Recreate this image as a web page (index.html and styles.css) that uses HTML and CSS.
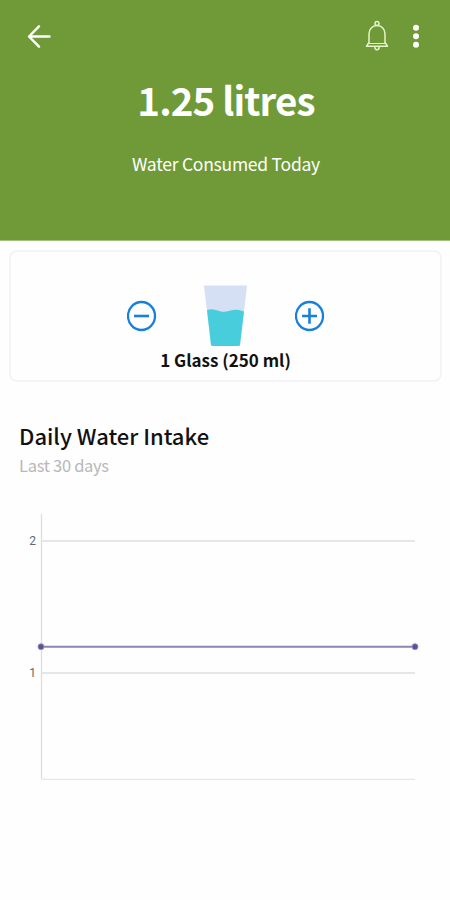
FILE: index.html
```html
<!DOCTYPE html>
<html lang="en">
<head>
    <meta charset="UTF-8">
    <meta name="viewport" content="width=device-width, initial-scale=1.0">
    <title>Water Intake</title>
    <link rel="stylesheet" href="styles.css">
</head>
<body>
    <header class="header">
        <div class="toolbar">
            <button class="icon-btn back" aria-label="Back">
                <svg width="24" height="24" viewBox="0 0 24 24" fill="none" stroke="#fff" stroke-width="2.4" stroke-linecap="round" stroke-linejoin="round">
                    <path d="M22.500 12.500H2M12 2.300L2 12.500L12 22.700"/>
                </svg>
            </button>
            <button class="icon-btn bell" aria-label="Reminders">
                <svg width="24" height="32" viewBox="0 0 24 32" fill="none" stroke="#e6f5c8" stroke-width="1.5" stroke-linejoin="round">
                    <circle cx="12" cy="3.6" r="2"/>
                    <path d="M1.500 26.200L4 22.500V14C4 9 7.300 5.600 12 5.600S20 9 20 14V22.500L22.500 26.200Z"/>
                    <path d="M4 23.500H20" stroke-width="1"/>
                    <path d="M9.800 27C9.800 30.600 14.200 30.600 14.200 27"/>
                </svg>
            </button>
            <button class="icon-btn more" aria-label="More">
                <svg width="8" height="24" viewBox="0 0 8 24" fill="#fff">
                    <circle cx="4" cy="3.800" r="3"/>
                    <circle cx="4" cy="12.300" r="3"/>
                    <circle cx="4" cy="20.700" r="3"/>
                </svg>
            </button>
        </div>
        <h1 class="total">1.25 litres</h1>
        <p class="caption">Water Consumed Today</p>
    </header>

    <section class="card">
        <div class="counter">
            <button class="icon-btn" aria-label="Remove a glass">
                <svg width="30" height="32" viewBox="0 0 30 32" fill="none" stroke="#1680dc" stroke-width="2.300">
                    <ellipse cx="14.500" cy="16" rx="13.500" ry="14"/>
                    <path d="M7 16H22" stroke-width="2.600"/>
                </svg>
            </button>
            <svg class="glass" width="44" height="62" viewBox="0 0 44 62">
                <path d="M0 0.500H43L36 61H7Z" fill="#d5e0f4"/>
                <path d="M3 25C8 23 12 25 17 26.500C25 28 29 22 40 26.500L36 59.500Q35.800 61 34 61H9Q7.200 61 7 59.500Z" fill="#48cddd"/>
            </svg>
            <button class="icon-btn" aria-label="Add a glass">
                <svg width="30" height="32" viewBox="0 0 30 32" fill="none" stroke="#1680dc" stroke-width="2.300">
                    <ellipse cx="14.500" cy="16" rx="13.500" ry="14"/>
                    <path d="M7 16H22M14.500 8.200V23.800" stroke-width="2.600"/>
                </svg>
            </button>
        </div>
        <p class="serving">1 Glass (250 ml)</p>
    </section>

    <section class="history">
        <h2>Daily Water Intake</h2>
        <p class="range">Last 30 days</p>
        <svg class="chart" width="412" height="290" viewBox="0 0 412 290">
            <g stroke="#dedede" stroke-width="1.300">
                <path d="M22.500 14V279"/>
                <path d="M22.500 41H396"/>
                <path d="M22.500 173H396"/>
                <path d="M22.500 279.300H396" stroke="#e6e6e6"/>
            </g>
            <g class="axis-label">
                <text x="17" y="44.500">2</text>
                <text x="17" y="177">1</text>
            </g>
            <path d="M22 146.700H396" stroke="#8a84b0" stroke-width="2"/>
            <g fill="#5c5096" stroke="#9890bd">
                <circle cx="22" cy="146.700" r="3"/>
                <circle cx="396" cy="146.700" r="3"/>
            </g>
        </svg>
    </section>
</body>
</html>
```

FILE: styles.css
```css
* {
    box-sizing: border-box;
}
body {
    margin: 0;
    background-color: #fefefe;
    color: #111;
    font-family: "Noto Sans CJK SC", "Noto Sans", sans-serif;
}
h1, h2, p {
    margin: 0;
}
.header {
    height: 241px;
    background-color: #6f9a37;
    border-bottom: 1px solid #a3bf80;
    color: #fff;
    text-align: center;
}
.toolbar {
    display: flex;
    align-items: center;
    height: 72px;
    padding: 0 30px 0 27px;
}
.icon-btn {
    display: flex;
    padding: 0;
    border: none;
    background: none;
    cursor: pointer;
}
.back {
    margin-right: auto;
}
.more {
    margin-left: 23px;
}
.total {
    padding-left: 2px;
    font-size: 38.5px;
    font-weight: 700;
    letter-spacing: -0.9px;
    line-height: 55px;
}
.caption {
    margin-top: 23px;
    padding-left: 2px;
    font-size: 17.5px;
    letter-spacing: -0.25px;
    line-height: 28px;
}
.card {
    height: 132px;
    margin: 9px 8px 0 9px;
    padding-top: 33px;
    border: 2px solid #f2f4f5;
    border-radius: 8px;
    text-align: center;
}
.counter {
    display: flex;
    justify-content: center;
    align-items: center;
    gap: 47px;
    height: 62px;
}
.serving {
    font-size: 17px;
    font-weight: 700;
    line-height: 25px;
}
.history {
    padding: 37px 19px 0;
}
.history h2 {
    font-size: 22px;
    font-weight: 500;
    line-height: 33px;
}
.range {
    color: #b8b8b8;
    font-size: 16.5px;
    letter-spacing: -0.3px;
    line-height: 26px;
}
.chart {
    display: block;
    margin-top: 22px;
}
.axis-label {
    fill: #666;
    font-family: Roboto, sans-serif;
    font-size: 12px;
    text-anchor: end;
}
```
